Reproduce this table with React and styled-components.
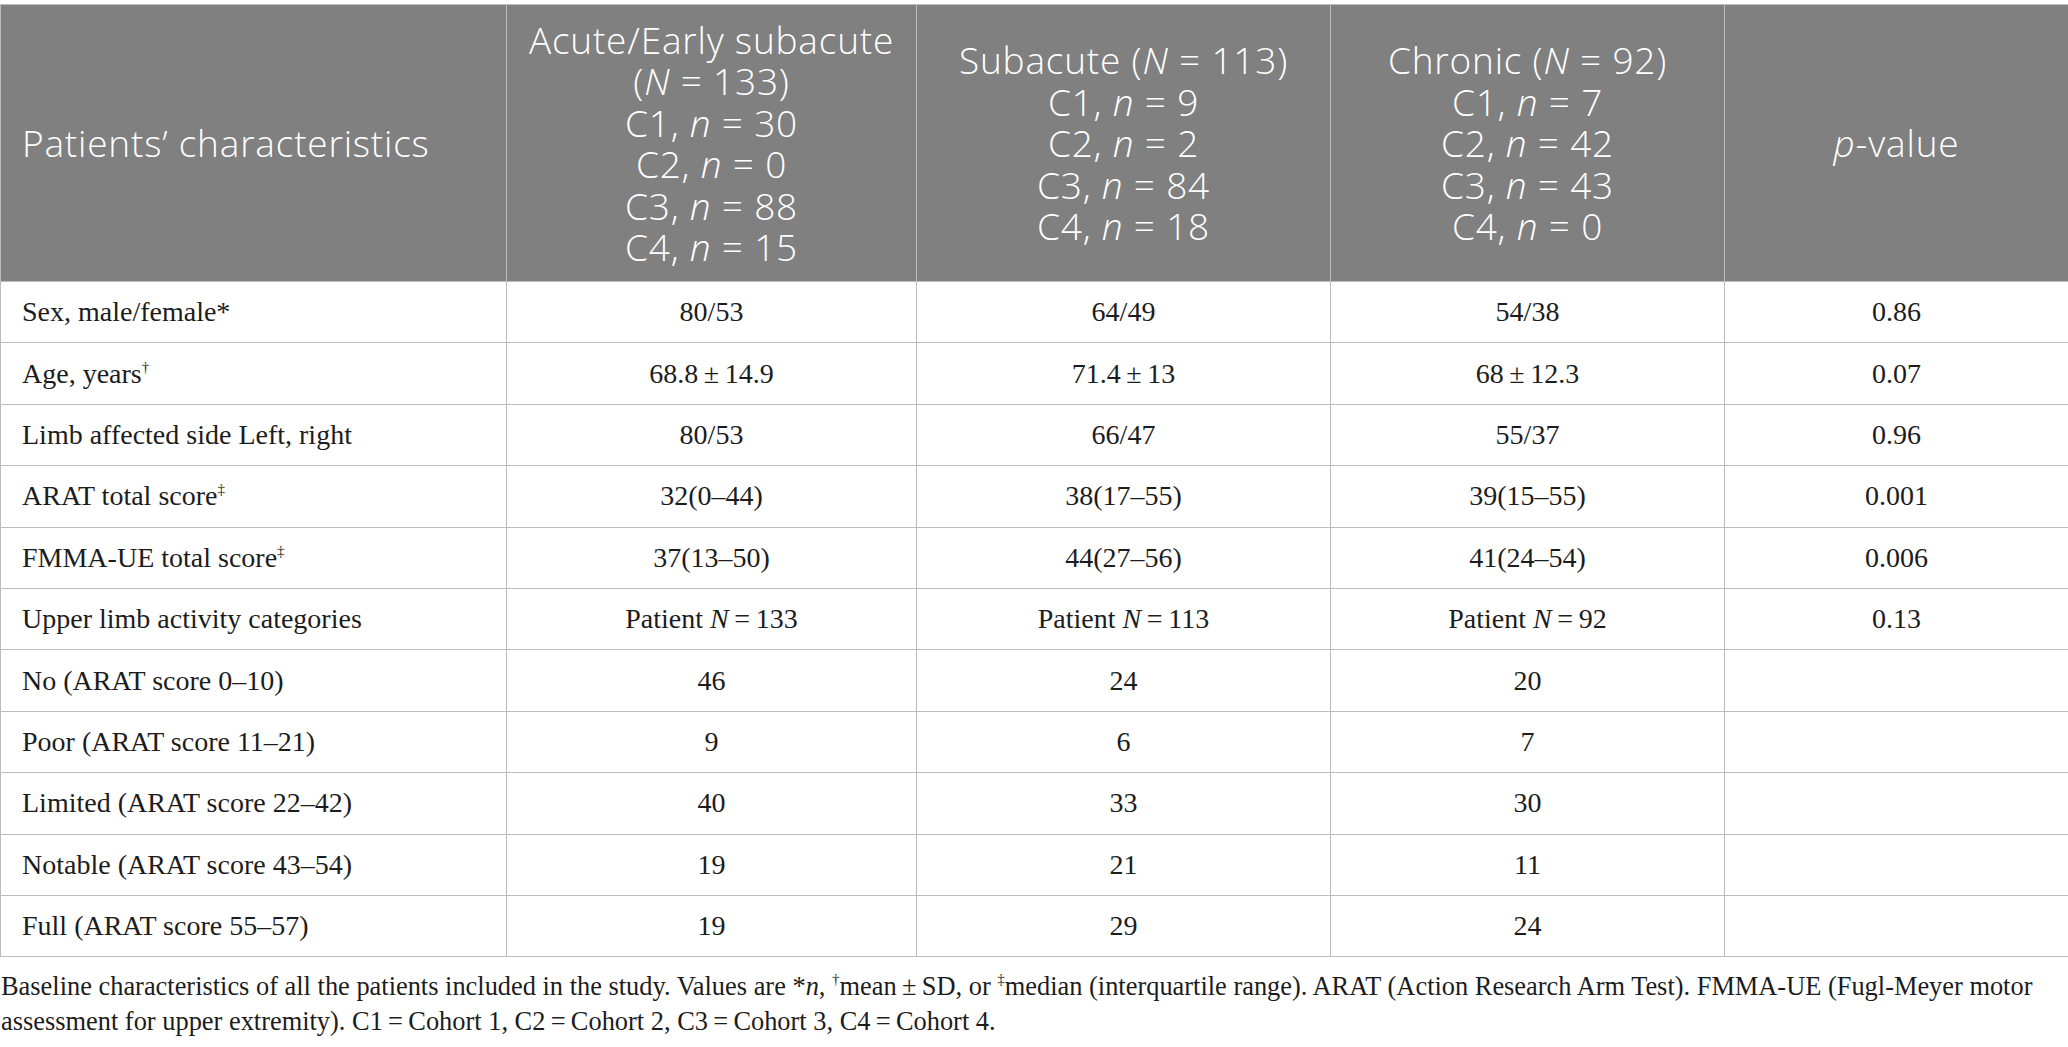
import styled, { createGlobalStyle } from 'styled-components';

const GlobalStyle = createGlobalStyle`
  body {
    margin: 0;
    background: #fff;
  }
`

const Page = styled.div`
  width: 2068px;
  padding-top: 4px;
`

const Table = styled.table`
  width: 2068px;
  border-collapse: collapse;
  table-layout: fixed;
`

const HeadRow = styled.tr`
  height: 277px;
  background: #7f807f;
`

const HeadCell = styled.th`
  font-family: "Open Sans", "Noto Sans", sans-serif;
  font-weight: 350;
  font-size: 37px;
  line-height: 41.5px;
  letter-spacing: 0.8px;
  color: #fff;
  text-align: ${props => props.$left ? 'left' : 'center'};
  padding: 0 0 0 ${props => props.$left ? '21px' : '0'};
  border: 1px solid #bcbcbc;
  vertical-align: middle;
`

const Row = styled.tr`
  height: 61.4px;
`

const Cell = styled.td`
  font-family: "Liberation Serif", "Times New Roman", serif;
  font-size: 28px;
  color: #1c1c1c;
  text-align: ${props => props.$left ? 'left' : 'center'};
  padding: 0 0 0 ${props => props.$left ? '21px' : '0'};
  border: 1px solid #bcbcbc;
  vertical-align: middle;
  white-space: nowrap;
`

const Sup = styled.sup`
  font-size: 15px;
  vertical-align: 11px;
  line-height: 0;
`

const Note = styled.p`
  margin: 12px 0 0;
  padding-left: 1px;
  font-family: "Liberation Serif", "Times New Roman", serif;
  font-size: 26.4px;
  line-height: 35px;
  color: #1c1c1c;
`

const T = '\u2009'

const groups = [
  { title: <>Acute/Early subacute<br />(<i>N</i> = 133)</>, c: [30, 0, 88, 15] },
  { title: <>Subacute (<i>N</i> = 113)</>, c: [9, 2, 84, 18] },
  { title: <>Chronic (<i>N</i> = 92)</>, c: [7, 42, 43, 0] },
]

const rows = [
  [<>Sex, male/female*</>, '80/53', '64/49', '54/38', '0.86'],
  [<>Age, years<Sup>†</Sup></>, `68.8${T}±${T}14.9`, `71.4${T}±${T}13`, `68${T}±${T}12.3`, '0.07'],
  [<>Limb affected side Left, right</>, '80/53', '66/47', '55/37', '0.96'],
  [<>ARAT total score<Sup>‡</Sup></>, '32(0–44)', '38(17–55)', '39(15–55)', '0.001'],
  [<>FMMA-UE total score<Sup>‡</Sup></>, '37(13–50)', '44(27–56)', '41(24–54)', '0.006'],
  [<>Upper limb activity categories</>, <>Patient <i>N</i>{`${T}=${T}133`}</>, <>Patient <i>N</i>{`${T}=${T}113`}</>, <>Patient <i>N</i>{`${T}=${T}92`}</>, '0.13'],
  [<>No (ARAT score 0–10)</>, '46', '24', '20', ''],
  [<>Poor (ARAT score 11–21)</>, '9', '6', '7', ''],
  [<>Limited (ARAT score 22–42)</>, '40', '33', '30', ''],
  [<>Notable (ARAT score 43–54)</>, '19', '21', '11', ''],
  [<>Full (ARAT score 55–57)</>, '19', '29', '24', ''],
]

function App() {
  return (
    <Page>
      <GlobalStyle />
      <Table>
        <colgroup>
          <col style={{ width: 506 }} />
          <col style={{ width: 410 }} />
          <col style={{ width: 414 }} />
          <col style={{ width: 394 }} />
          <col style={{ width: 344 }} />
        </colgroup>
        <thead>
          <HeadRow>
            <HeadCell $left>Patients’ characteristics</HeadCell>
            {groups.map((g, i) => (
              <HeadCell key={i}>
                {g.title}
                {g.c.map((n, j) => (
                  <div key={j}>{`C${j + 1}, `}<i>n</i>{` = ${n}`}</div>
                ))}
              </HeadCell>
            ))}
            <HeadCell><i>p</i>-value</HeadCell>
          </HeadRow>
        </thead>
        <tbody>
          {rows.map((r, i) => (
            <Row key={i}>
              {r.map((v, j) => (
                <Cell key={j} $left={j === 0}>{v}</Cell>
              ))}
            </Row>
          ))}
        </tbody>
      </Table>
      <Note>
        {'Baseline characteristics of all the patients included in the study. Values are *'}<i>n</i>{', '}
        <Sup>†</Sup>{`mean${T}±${T}SD, or `}<Sup>‡</Sup>
        {`median (interquartile range). ARAT (Action Research Arm Test). FMMA-UE (Fugl-Meyer motor assessment for upper extremity). C1${T}=${T}Cohort 1, C2${T}=${T}Cohort 2, C3${T}=${T}Cohort 3, C4${T}=${T}Cohort 4.`}
      </Note>
    </Page>
  )
}

export default App;
